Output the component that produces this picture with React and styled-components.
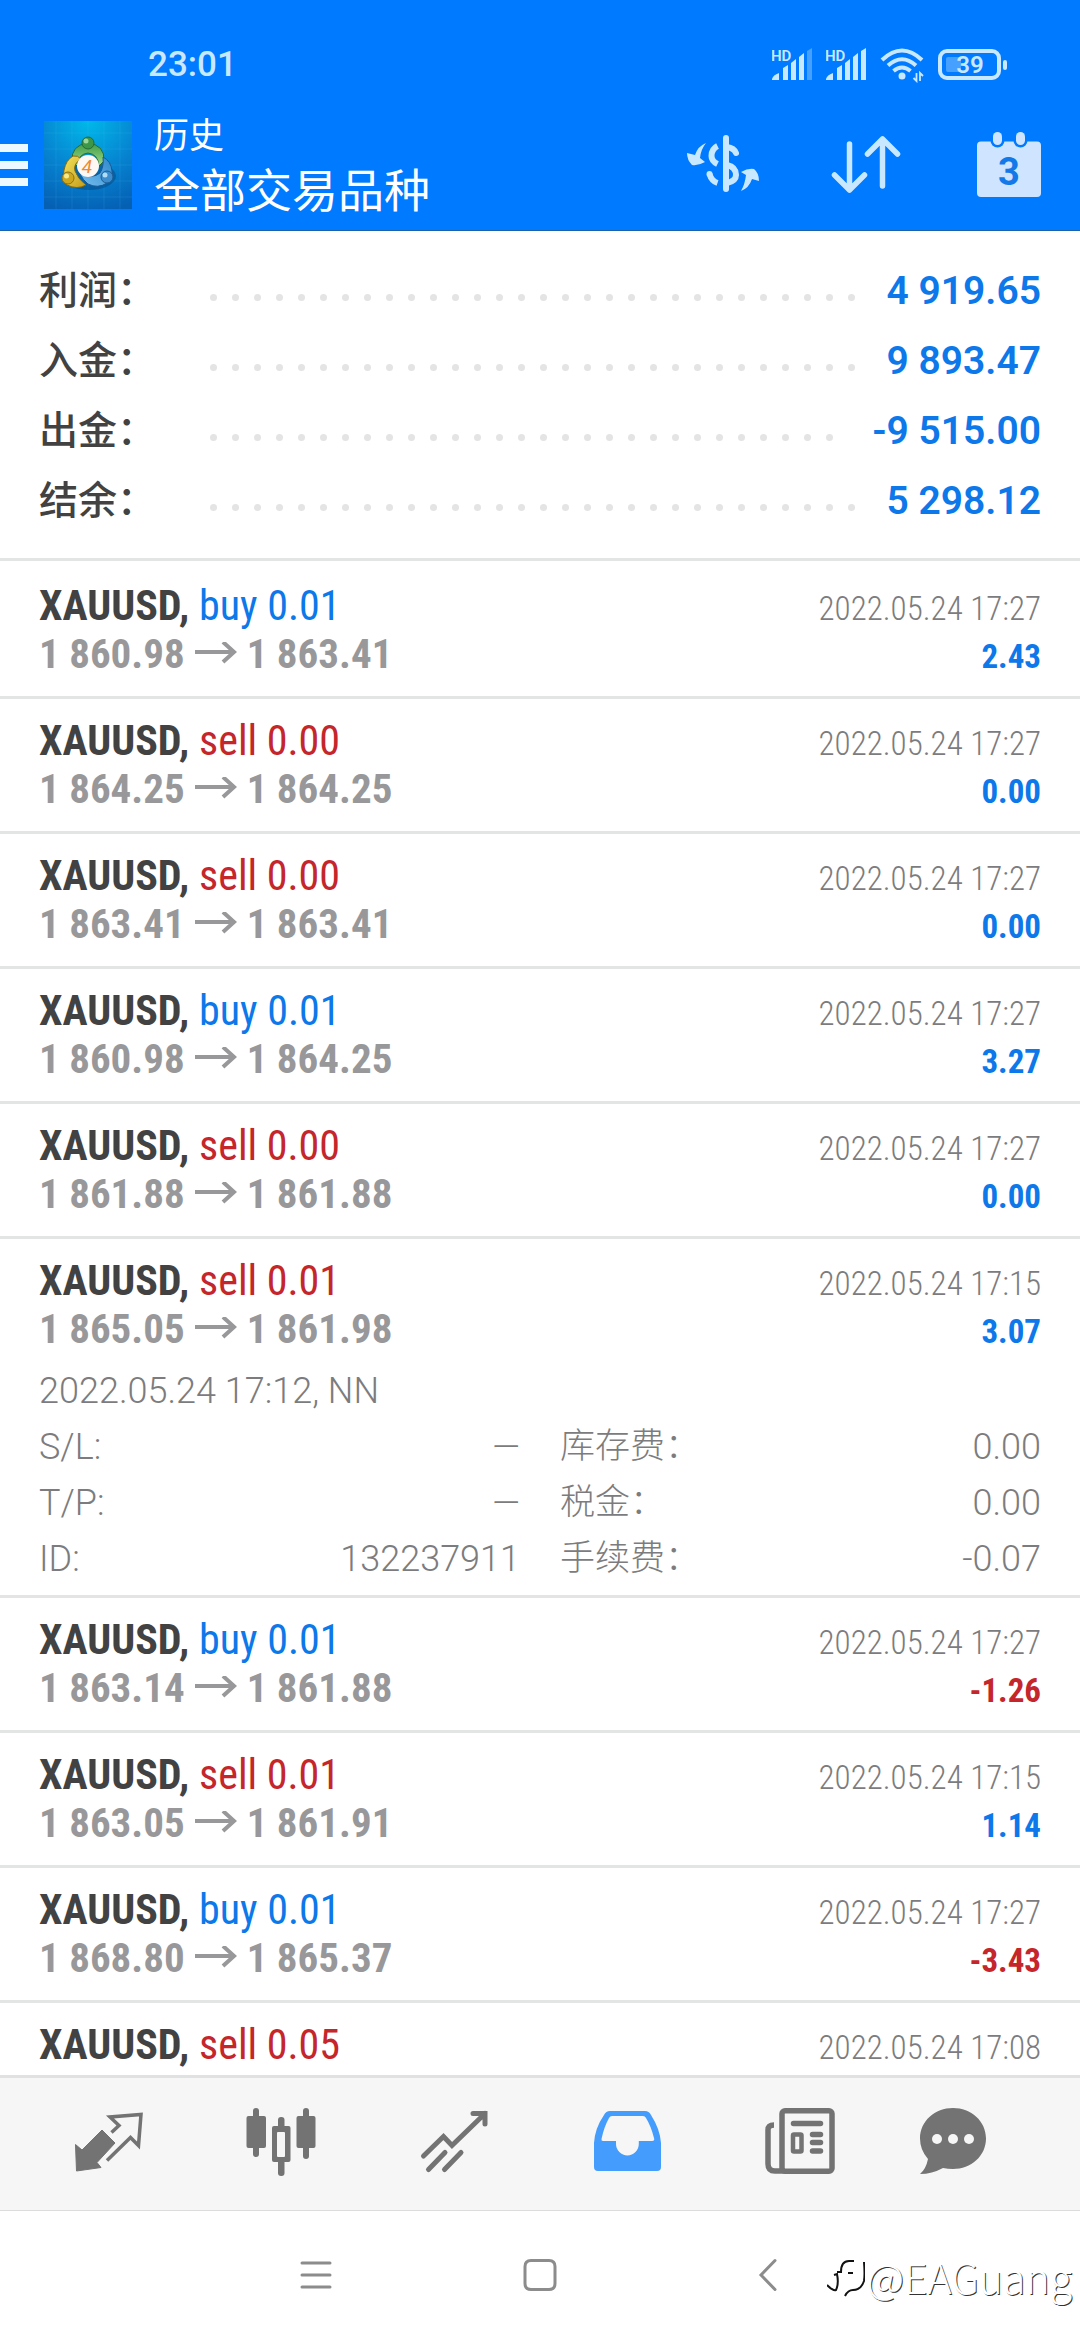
import React from "react";
import styled, { createGlobalStyle } from "styled-components";

const color = {
  bar: "#007aff",
  blue: "#0c78ea",
  red: "#c4262b",
  ink: "#424242",
  muted: "#98989a",
  thin: "#7c7c7e",
  line: "#e3e4e4",
  icon: "#737373",
  pale: "#cfe5ff",
  status: "#c8e8ff",
};

const sans = `Roboto, "Noto Sans CJK SC", sans-serif`;
const condensed = `"Roboto Condensed", Roboto, "Noto Sans CJK SC", sans-serif`;

const GlobalStyle = createGlobalStyle`
  *, *::before, *::after { box-sizing: border-box; }
  body { margin: 0; background: #fff; font-family: ${sans}; }
  h1, p, ul, dl, dd { margin: 0; padding: 0; }
  ul { list-style: none; }
  button { margin: 0; padding: 0; border: 0; background: none; font: inherit; color: inherit; cursor: pointer; }
  svg { display: block; flex: none; }
`;

const Screen = styled.div`
  position: relative;
  display: flex;
  flex-direction: column;
  height: 100vh;
  overflow: hidden;
  background: #fff;
`;

const Header = styled.header`
  flex: none;
  padding-top: 43px;
  background: ${color.bar};
  border-bottom: 1px solid #1c62ab;
  color: #fff;
`;

const StatusBar = styled.div`
  display: flex;
  align-items: center;
  justify-content: space-between;
  height: 44px;
  padding: 0 72px 0 148px;
  color: ${color.status};
`;

const Clock = styled.time`
  font-size: 35px;
  font-weight: 500;
  line-height: 44px;
`;

const StatusIcons = styled.div`
  display: flex;
  align-items: center;
  gap: 14px;
`;

const AppBar = styled.div`
  display: flex;
  align-items: center;
  height: 143px;
  padding-top: 12px;
`;

const MenuButton = styled.button`
  display: flex;
  flex-direction: column;
  gap: 9px;
  width: 28px;
  margin-right: 16px;
`;

const MenuBar = styled.span`
  height: 8px;
  background: #ecfaff;
`;

const Titles = styled.div`
  flex: 1;
  min-width: 0;
  margin-left: 22px;
  font-weight: 400;
`;

const Section = styled.p`
  font-size: 35px;
  line-height: 52px;
`;

const Title = styled.h1`
  font-size: 46px;
  font-weight: 400;
  line-height: 56px;
`;

const ToolButton = styled.button`
  display: flex;
  justify-content: center;
  width: 143px;
`;

const Summary = styled.dl`
  flex: none;
  padding: 25px 39px 22px;
  border-bottom: 3px solid ${color.line};
`;

const SummaryRow = styled.div`
  display: flex;
  align-items: center;
  font-size: 39px;
  line-height: 70px;
`;

const SummaryLabel = styled.dt`
  width: 164px;
  font-weight: 500;
  color: ${color.ink};
`;

const Leader = styled.span`
  display: flex;
  flex: 1;
  flex-wrap: wrap;
  align-items: flex-end;
  height: 20px;
  margin-right: 18px;
  overflow: hidden;
`;

const Dot = styled.i`
  width: 22px;
  height: 20px;
  padding: 13px 8px 0 7px;

  &::before {
    content: "";
    display: block;
    height: 7px;
    border-radius: 50%;
    background: #e4e4e4;
  }
`;

const SummaryValue = styled.dd`
  font-weight: 600;
  color: ${color.blue};
`;

const DealList = styled.ul`
  flex: 1;
  min-height: 0;
  padding-top: 3px;
  overflow: hidden;
`;

const Deal = styled.li`
  padding: 18px 39px ${(p) => (p.$open ? "8px" : "18px")};
  border-bottom: 3px solid ${color.line};
  font-family: ${condensed};
`;

const Line = styled.div`
  display: flex;
  align-items: baseline;
  justify-content: space-between;
  height: 48px;
  line-height: 48px;
`;

const Symbol = styled.span`
  font-size: 42px;
  font-weight: 700;
  color: ${color.ink};
`;

const Side = styled.span`
  font-weight: 400;
  color: ${(p) => (p.$sell ? color.red : color.blue)};
`;

const Prices = styled.span`
  display: flex;
  align-items: center;
  gap: 10px;
  font-size: 41px;
  font-weight: 700;
  color: ${color.muted};
`;

const Time = styled.time`
  font-size: 33px;
  font-weight: 300;
  color: ${color.thin};
`;

const Profit = styled.span`
  font-size: 33px;
  font-weight: 700;
  color: ${(p) => (p.$loss ? color.red : color.blue)};
`;

const Details = styled.div`
  margin-top: 10px;
  font-family: ${sans};
  font-size: 36px;
  font-weight: 300;
  line-height: 56px;
  color: ${color.thin};
`;

const Fields = styled.dl`
  display: grid;
  grid-template-columns: 1fr 1fr;
  column-gap: 40px;
`;

const Field = styled.div`
  display: flex;
  justify-content: space-between;
`;

const FieldLabel = styled.dt`
  font-size: ${(p) => (p.$cjk ? "35px" : "36px")};
`;

const TabBar = styled.nav`
  display: grid;
  flex: none;
  grid-template-columns: repeat(5, 13fr) 10fr;
  height: 136px;
  padding: 0 60px 0 22px;
  border-top: 3px solid #e0e1e1;
  border-bottom: 1px solid #dcdcdc;
  background: #f6f6f6;
`;

const Tab = styled.button`
  display: flex;
  align-items: center;
  justify-content: center;
  color: ${(p) => (p.$active ? "#449cfc" : color.icon)};
`;

const SystemBar = styled.nav`
  display: flex;
  flex: none;
  justify-content: center;
  height: 129px;
  color: #8c8c8c;
`;

const SystemButton = styled.button`
  display: flex;
  align-items: center;
  justify-content: center;
  width: 224px;
`;

const Watermark = styled.div`
  position: absolute;
  right: 8px;
  bottom: 36px;
  display: flex;
  align-items: center;
  gap: 2px;
  font-family: "Noto Sans CJK SC", sans-serif;
  font-size: 41px;
  font-weight: 300;
  line-height: 56px;
  color: #fff;
  text-shadow: 1px 1px 0 #333;
`;

const Signal = ({ weak }) => (
  <svg width="40" height="34" viewBox="0 0 40 34" fill="currentColor" aria-hidden="true">
    <text x="-1" y="13" fontFamily="Roboto, sans-serif" fontSize="15" fontWeight="600">HD</text>
    <path d="M0 32v-1q1-4 7-6v7zM11 32V20l5-3v15zM19 32V15l5-4v21zM27 32V9l5-4v27z" />
    <path d="M35 32V3l5-3v32z" opacity={weak ? 0.35 : 1} />
  </svg>
);

const Wifi = () => (
  <svg width="44" height="36" viewBox="0 0 44 36" fill="none" stroke="currentColor" strokeWidth="4" aria-hidden="true">
    <path d="M2 13Q22-6 42 13M8 18.500Q22 6 36 18.500M13.500 24Q22 17 30.500 24" />
    <circle cx="22" cy="29" r="3.500" fill="currentColor" stroke="none" />
    <path d="M36.500 26v8l-3-3M40 34v-8l3 3" strokeWidth="1.800" />
  </svg>
);

const Battery = () => (
  <svg width="70" height="32" viewBox="0 0 70 32" fill="currentColor" aria-hidden="true">
    <rect x="2" y="2" width="59" height="27" rx="7" fill="none" stroke="currentColor" strokeWidth="4" />
    <rect x="8" y="8" width="15" height="15" rx="2" opacity="0.35" />
    <rect x="65" y="11" width="4" height="10" rx="2" />
    <text x="32" y="24" textAnchor="middle" fontFamily="Roboto, sans-serif" fontSize="24" fontWeight="600">39</text>
  </svg>
);

const Logo = () => (
  <svg width="88" height="88" viewBox="0 0 88 88" role="img" aria-label="MetaTrader 4">
    <defs>
      <radialGradient id="sky" cx="50%" cy="0%" r="105%">
        <stop offset="0" stopColor="#00b9ea" />
        <stop offset="0.55" stopColor="#0683d0" />
        <stop offset="1" stopColor="#0560b4" />
      </radialGradient>
      <linearGradient id="green" x1="0" y1="0" x2="0" y2="1">
        <stop offset="0" stopColor="#3d9b4b" />
        <stop offset="1" stopColor="#a4dc84" />
      </linearGradient>
      <linearGradient id="gold" x1="0" y1="0" x2="1" y2="1">
        <stop offset="0" stopColor="#f5e45b" />
        <stop offset="1" stopColor="#c39c1c" />
      </linearGradient>
      <linearGradient id="azure" x1="1" y1="0" x2="0" y2="1">
        <stop offset="0" stopColor="#2f87cb" />
        <stop offset="1" stopColor="#74bff0" />
      </linearGradient>
    </defs>
    <rect width="88" height="88" fill="url(#sky)" />
    <path d="M0 12h88M0 28h88M0 44h88M0 60h88M0 76h88M12 0v88M28 0v88M44 0v88M60 0v88M76 0v88" stroke="#58c8f5" strokeOpacity="0.14" />
    <ellipse cx="45" cy="55" rx="27" ry="14" fill="#03427c" opacity="0.45" />
    <path d="M28 40Q27 24 44 22q17 2 16 18l-5 5q-1-12-11-13-10 1-11 13z" fill="url(#green)" stroke="#256b31" />
    <path d="M29 35q5-1 8 3-8 5-6 12 3 8 11 14-9 5-19 0-5-5-3-15 2-10 9-14z" fill="url(#gold)" stroke="#7f6710" />
    <path d="M59 36q8 4 9 14 1 8-5 12-9 6-19 1-5-4-8-10 13 5 20-1 4-6 3-16z" fill="url(#azure)" stroke="#1b5a94" />
    <circle cx="44" cy="22" r="6" fill="#3d9748" stroke="#276a31" />
    <circle cx="42" cy="20" r="2.500" fill="#9bd69a" />
    <circle cx="24" cy="57" r="6" fill="#cda81f" stroke="#8d7112" />
    <circle cx="22.500" cy="55" r="2.500" fill="#f6ea8e" />
    <circle cx="63" cy="56" r="6" fill="#3b8dce" stroke="#1d5c94" />
    <circle cx="61" cy="54" r="2.500" fill="#b2dcf6" />
    <circle cx="44" cy="45" r="11" fill="#fdf8f3" />
    <text x="43" y="52" textAnchor="middle" fontFamily="Roboto, sans-serif" fontSize="19" fontStyle="italic" fill="#ee8a35">4</text>
  </svg>
);

const Svg72 = ({ children, ...rest }) => (
  <svg width="72" height="72" viewBox="0 0 72 72" fill="none" aria-hidden="true" {...rest}>
    {children}
  </svg>
);

const CurrencyIcon = () => (
  <Svg72 stroke={color.status} strokeWidth="6">
    <path d="M39 9v51" strokeLinecap="round" />
    <path d="M40 18q7 1 9 6M40 36q9 2 9 10 0 6-9 8" strokeLinecap="round" />
    <path d="M30.500 17q-6 3-6 10 0 5 6 8M22.500 45q2 7 8 9" />
    <circle cx="22.500" cy="45" r="3" fill={color.status} stroke="none" />
    <path d="M19 14q-8 3-11 12l-8-2q0 7 5 12 6 1 13-3l-5-4Q14 20 19 14zM54 62q8-3 11-12l7 2q0-8-5-12-6-1-13 3l5 3q-1 9-5 16z" fill={color.status} stroke="none" />
  </Svg72>
);

const SortIcon = () => (
  <Svg72 stroke={color.status} strokeWidth="5.500" strokeLinecap="round" strokeLinejoin="round">
    <path d="M19.500 15v46M4.500 46l15 15 15-15M52.500 57V10M37.500 25l15-15 15 15" />
  </Svg72>
);

const CalendarIcon = () => (
  <Svg72 fill={color.pale}>
    <rect x="4" y="12.500" width="64" height="55.500" rx="4" />
    <rect x="17.500" y="1" width="14" height="17.500" rx="7" fill={color.bar} />
    <rect x="40.500" y="1" width="14" height="17.500" rx="7" fill={color.bar} />
    <rect x="20" y="3" width="9" height="13" rx="4.500" />
    <rect x="43" y="3" width="9" height="13" rx="4.500" />
    <text x="36" y="56" textAnchor="middle" fontFamily="Roboto, sans-serif" fontSize="38" fontWeight="700" fill="#1479e8">3</text>
  </Svg72>
);

const Arrow = () => (
  <svg width="42" height="24" viewBox="0 0 42 24" fill="none" stroke="currentColor" strokeWidth="4" aria-label="to">
    <path d="M0 10h39M28 0l11 10-11 10" />
  </svg>
);

const QuotesIcon = () => (
  <Svg72>
    <path d="M3.500 36.500l6.500 5.500 20-20 13 13-18 19.500 4 5L4.500 63z" fill="currentColor" stroke="currentColor" strokeLinejoin="round" />
    <path d="M39.500 24.500l7.500-7-9-8.500 31-2.500-2.500 31-8-8L35 52.500" stroke="currentColor" strokeWidth="3.500" />
  </Svg72>
);

const CandlesIcon = () => (
  <Svg72 fill="currentColor">
    <rect x="8" width="6" height="49" rx="3" />
    <rect x="1.500" y="8" width="19.500" height="32" rx="2" />
    <rect x="58" width="6" height="51" rx="3" />
    <rect x="51.500" y="8" width="19" height="32" rx="2" />
    <rect x="33" y="9" width="6.500" height="59" rx="3" />
    <rect x="27" y="18" width="18.500" height="36" rx="2" />
    <rect x="32" y="24" width="8" height="25" rx="1" fill="#f6f6f6" />
  </Svg72>
);

const TrendIcon = () => (
  <Svg72 stroke="currentColor" strokeWidth="5" strokeLinecap="round">
    <path d="M5.500 48l20-19.500 8.500 9L67 5.500M55 5.500h12V16M10.500 61.500l16.500-17M26.500 61.500l16.500-17" />
  </Svg72>
);

const InboxIcon = () => (
  <Svg72 fill="currentColor">
    <path
      fillRule="evenodd"
      d="M19 3h35q4 0 6 4 9 14 10 28v24q0 4-4 4H7q-4 0-4-4V35Q4 20 13 7q2-4 6-4zm2 5q-2 0-3 2-5 9-7.500 21-.5 2 1.500 2h13v3a11.400 11.400 0 0 0 22.800 0v-3H61q3 0 2-3-3-12-8-20-1-2-3-2z"
    />
  </Svg72>
);

const NewsIcon = () => (
  <Svg72 stroke="currentColor" strokeLinecap="round">
    <rect x="18" y="2.750" width="50" height="60.500" rx="3" strokeWidth="5.500" />
    <path d="M10 17q-6 0-6 5v34q0 7 7 7h10" strokeWidth="5.500" strokeLinecap="butt" />
    <path d="M29.500 15.500h27M48.500 26.500h8M48.500 34.500h8M48.500 43h8" strokeWidth="5.500" />
    <rect x="29" y="26.500" width="8.500" height="17" rx="1" strokeWidth="4.500" />
  </Svg72>
);

const ChatIcon = () => (
  <Svg72 fill="currentColor">
    <path d="M36 0c18 0 33 13 33 30.500S54 61 36 61q-5 0-10-1-11 6-23 6 6-5 8-15-8-9-8-20.500C3 13 18 0 36 0z" />
    <g fill="#f6f6f6">
      <circle cx="20" cy="31" r="5" />
      <circle cx="36" cy="31" r="5" />
      <circle cx="52" cy="31" r="5" />
    </g>
  </Svg72>
);

const SystemIcon = ({ d }) => (
  <svg width="36" height="36" viewBox="0 0 36 36" fill="none" stroke="currentColor" strokeWidth="3" strokeLinecap="round" aria-hidden="true">
    <path d={d} />
  </svg>
);

const WatermarkMark = () => (
  <svg width="38" height="44" viewBox="0 0 38 44" fill="none" stroke="#111" strokeWidth="2" aria-hidden="true">
    <path d="M0 31q6 6 9 5 3-6 1-16l-3 1M10 18h4q0-11 8-11h5" />
    <path d="M37 8q1 13 0 19-3 9-11 9-5 0-8 6M21 19h5" />
  </svg>
);

const summary = [
  ["利润：", "4 919.65"],
  ["入金：", "9 893.47"],
  ["出金：", "-9 515.00"],
  ["结余：", "5 298.12"],
];

const deals = [
  { side: "buy", volume: "0.01", from: "1 860.98", to: "1 863.41", time: "2022.05.24 17:27", profit: "2.43" },
  { side: "sell", volume: "0.00", from: "1 864.25", to: "1 864.25", time: "2022.05.24 17:27", profit: "0.00" },
  { side: "sell", volume: "0.00", from: "1 863.41", to: "1 863.41", time: "2022.05.24 17:27", profit: "0.00" },
  { side: "buy", volume: "0.01", from: "1 860.98", to: "1 864.25", time: "2022.05.24 17:27", profit: "3.27" },
  { side: "sell", volume: "0.00", from: "1 861.88", to: "1 861.88", time: "2022.05.24 17:27", profit: "0.00" },
  {
    side: "sell", volume: "0.01", from: "1 865.05", to: "1 861.98", time: "2022.05.24 17:15", profit: "3.07",
    opened: "2022.05.24 17:12, NN",
    fields: [
      ["S/L:", "—"], ["库存费：", "0.00"],
      ["T/P:", "—"], ["税金：", "0.00"],
      ["ID:", "132237911"], ["手续费：", "-0.07"],
    ],
  },
  { side: "buy", volume: "0.01", from: "1 863.14", to: "1 861.88", time: "2022.05.24 17:27", profit: "-1.26" },
  { side: "sell", volume: "0.01", from: "1 863.05", to: "1 861.91", time: "2022.05.24 17:15", profit: "1.14" },
  { side: "buy", volume: "0.01", from: "1 868.80", to: "1 865.37", time: "2022.05.24 17:27", profit: "-3.43" },
  { side: "sell", volume: "0.05", time: "2022.05.24 17:08" },
];

const tabs = [
  ["行情", QuotesIcon],
  ["图表", CandlesIcon],
  ["交易", TrendIcon],
  ["历史", InboxIcon],
  ["新闻", NewsIcon],
  ["消息", ChatIcon],
];

function DealItem({ deal }) {
  return (
    <Deal $open={Boolean(deal.fields)}>
      <Line>
        <Symbol>
          XAUUSD, <Side $sell={deal.side === "sell"}>{deal.side} {deal.volume}</Side>
        </Symbol>
        <Time>{deal.time}</Time>
      </Line>
      {deal.from && (
        <Line>
          <Prices>
            <span>{deal.from}</span>
            <Arrow />
            <span>{deal.to}</span>
          </Prices>
          <Profit $loss={deal.profit.startsWith("-")}>{deal.profit}</Profit>
        </Line>
      )}
      {deal.fields && (
        <Details>
          <p>{deal.opened}</p>
          <Fields>
            {deal.fields.map(([label, value]) => (
              <Field key={label}>
                <FieldLabel $cjk={label.endsWith("：")}>{label}</FieldLabel>
                <dd>{value}</dd>
              </Field>
            ))}
          </Fields>
        </Details>
      )}
    </Deal>
  );
}

export default function App() {
  return (
    <Screen>
      <GlobalStyle />
      <Header>
        <StatusBar>
          <Clock>23:01</Clock>
          <StatusIcons>
            <Signal weak />
            <Signal />
            <Wifi />
            <Battery />
          </StatusIcons>
        </StatusBar>
        <AppBar>
          <MenuButton aria-label="菜单">
            <MenuBar />
            <MenuBar />
            <MenuBar />
          </MenuButton>
          <Logo />
          <Titles>
            <Section>历史</Section>
            <Title>全部交易品种</Title>
          </Titles>
          <ToolButton aria-label="品种"><CurrencyIcon /></ToolButton>
          <ToolButton aria-label="排序"><SortIcon /></ToolButton>
          <ToolButton aria-label="日期"><CalendarIcon /></ToolButton>
        </AppBar>
      </Header>

      <Summary>
        {summary.map(([label, value]) => (
          <SummaryRow key={label}>
            <SummaryLabel>{label}</SummaryLabel>
            <Leader aria-hidden="true">
              {Array.from({ length: 30 }, (_, i) => <Dot key={i} />)}
            </Leader>
            <SummaryValue>{value}</SummaryValue>
          </SummaryRow>
        ))}
      </Summary>

      <DealList>
        {deals.map((deal, i) => <DealItem key={i} deal={deal} />)}
      </DealList>

      <TabBar>
        {tabs.map(([label, Icon]) => (
          <Tab key={label} aria-label={label} $active={Icon === InboxIcon}>
            <Icon />
          </Tab>
        ))}
      </TabBar>

      <SystemBar>
        <SystemButton aria-label="最近任务"><SystemIcon d="M4 5h28M4 17h28M4 29h28" /></SystemButton>
        <SystemButton aria-label="主屏幕"><SystemIcon d="M9 2.500h18q6 0 6 6v17q0 6-6 6H9q-6 0-6-6v-17q0-6 6-6z" /></SystemButton>
        <SystemButton aria-label="返回"><SystemIcon d="M29 2.500L15 17l14 14.500" /></SystemButton>
      </SystemBar>

      <Watermark>
        <WatermarkMark />
        <span>@EAGuang</span>
      </Watermark>
    </Screen>
  );
}
